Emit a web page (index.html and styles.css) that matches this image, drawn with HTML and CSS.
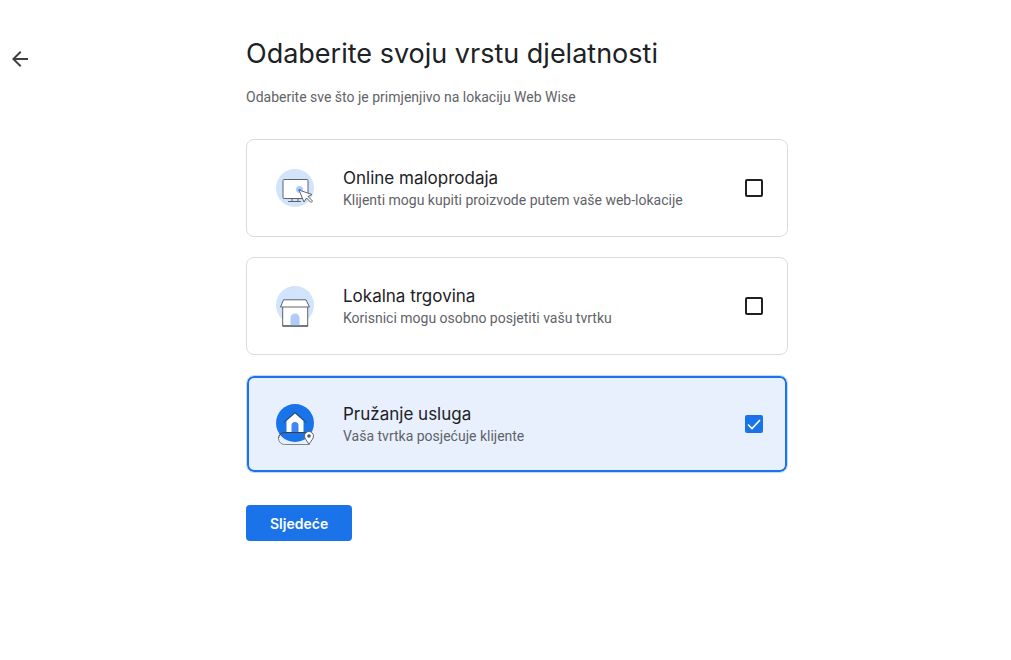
FILE: index.html
```html
<!DOCTYPE html>
<html lang="hr">
<head>
    <meta charset="UTF-8">
    <meta name="viewport" content="width=device-width, initial-scale=1.0">
    <title>Odaberite svoju vrstu djelatnosti</title>
    <link rel="stylesheet" href="styles.css">
</head>
<body>

    <div class="page">
        <a class="back" href="#" aria-label="Natrag">
            <svg width="24" height="24" viewBox="0 0 24 24" fill="#3c4043">
                <path d="M20 11H7.8l5.6-5.6L12 4l-8 8 8 8 1.4-1.4L7.8 13H20z"/>
            </svg>
        </a>

        <main class="content">
            <h1>Odaberite svoju vrstu djelatnosti</h1>
            <p class="subtitle">Odaberite sve što je primjenjivo na lokaciju Web Wise</p>

            <form class="options">
                <label class="card">
                    <svg class="card-icon" viewBox="0 0 48 48" fill="none">
                        <circle cx="24" cy="24" r="19" fill="#d2e3fc"/>
                        <rect x="12" y="15.5" width="25" height="19" rx="1" fill="#fff" stroke="#5f6368"/>
                        <path d="M21 34.5v3h6v-3M17 37.5h13" stroke="#5f6368"/>
                        <circle cx="28.5" cy="25.5" r="3.5" fill="#aecbfa"/>
                        <path d="M28 26l5 12 2.5-4 4.5 4.5 1.5-1.5-4.500-4.500 4-2z" fill="#fff" stroke="#5f6368"/>
                        <circle cx="28.5" cy="26" r="1.2" fill="#4285f4"/>
                    </svg>
                    <span class="card-text">
                        <span class="card-title">Online maloprodaja</span>
                        <span class="card-desc">Klijenti mogu kupiti proizvode putem vaše web-lokacije</span>
                    </span>
                    <input type="checkbox" name="type" value="online">
                </label>

                <label class="card">
                    <svg class="card-icon" viewBox="0 0 48 48" fill="none">
                        <circle cx="24" cy="23" r="19" fill="#d2e3fc"/>
                        <path d="M11.7 25v19h25V25" fill="#fff" stroke="#5f6368"/>
                        <path d="M19.5 44v-8a4.500 4.500 0 0 1 9 0v8z" fill="#aecbfa"/>
                        <path d="M11.500 44h25.500" stroke="#3c4043"/>
                        <path d="M12.5 17.800h22.500l3.500 7.200h-29z" fill="#fff" stroke="#5f6368" stroke-linejoin="round"/>
                    </svg>
                    <span class="card-text">
                        <span class="card-title">Lokalna trgovina</span>
                        <span class="card-desc">Korisnici mogu osobno posjetiti vašu tvrtku</span>
                    </span>
                    <input type="checkbox" name="type" value="local">
                </label>

                <label class="card selected">
                    <svg class="card-icon" viewBox="0 0 48 48" fill="none">
                        <circle cx="24" cy="23" r="19" fill="#1a73e8"/>
                        <path d="M15.500 32.500V21L24 13.500l8.500 7.500v11.500z" fill="#fff"/>
                        <path d="M20.500 32v-6.500a3.500 3.500 0 0 1 7 0V32z" fill="#4285f4"/>
                        <path d="M12.500 22.500L24 12.500l11.500 10" stroke="#3c4043"/>
                        <path d="M35 32.500H13.500a6 6 0 0 0-6 6" stroke="#3c4043"/>
                        <path d="M7.500 38.500a6 6 0 0 0 6 6H38" stroke="#80868b"/>
                        <path d="M38 44.500c-2-4-4.500-5.500-4.500-8.500a4.500 4.500 0 0 1 9 0c0 3-2.500 4.500-4.500 8.500z" fill="#fff" stroke="#5f6368"/>
                        <circle cx="38" cy="36" r="1.8" fill="#3c5a8c"/>
                    </svg>
                    <span class="card-text">
                        <span class="card-title">Pružanje usluga</span>
                        <span class="card-desc">Vaša tvrtka posjećuje klijente</span>
                    </span>
                    <input type="checkbox" name="type" value="service" checked>
                </label>

                <button type="submit" class="btn">Sljedeće</button>
            </form>
        </main>
    </div>

    <script src="script.js"></script>
</body>
</html>
```

FILE: styles.css
```css
* {
    box-sizing: border-box;
}

body {
    margin: 0;
    background: #fff;
    color: #202124;
    font-family: Roboto, "Liberation Sans", sans-serif;
    font-size: 14px;
}

.page {
    display: flex;
    gap: 24px;
    padding: 36px 33px 36px 8px;
}

.back {
    flex: none;
    height: 24px;
    margin-top: 11px;
}

.content {
    flex: 1;
    max-width: 542px;
    margin: 0 auto;
}

h1 {
    margin: 0;
    font-family: Inter, Roboto, sans-serif;
    font-size: 27px;
    font-weight: 400;
    line-height: 36px;
}

.subtitle {
    margin: 15px 0 32px;
    color: #5f6368;
    line-height: 20px;
}

.options {
    display: flex;
    flex-direction: column;
    gap: 20px;
}

.card {
    display: flex;
    align-items: center;
    min-height: 98px;
    padding: 16px 24px;
    border: 1px solid #dadce0;
    border-radius: 8px;
    cursor: pointer;
}

.card.selected {
    background: #e8f0fe;
    border-color: #c6dafc;
    box-shadow: inset 0 0 0 2px #1a73e8;
}

.card-icon {
    flex: none;
    width: 48px;
    height: 48px;
    margin-right: 24px;
}

.card-text {
    display: flex;
    flex: 1;
    flex-direction: column;
}

.card-title {
    font-family: Inter, Roboto, sans-serif;
    font-size: 17px;
    line-height: 24px;
}

.card-desc {
    color: #5f6368;
    line-height: 20px;
}

.card input {
    appearance: none;
    flex: none;
    width: 18px;
    height: 18px;
    margin: 0;
    border: 2px solid #202124;
    border-radius: 2px;
    cursor: pointer;
}

.card input:checked {
    border: none;
    background: #1a73e8 url("data:image/svg+xml,%3Csvg xmlns='http://www.w3.org/2000/svg' viewBox='0 0 18 18'%3E%3Cpath d='M3 9.500l4 4 8-8.500' fill='none' stroke='white' stroke-width='1.600'/%3E%3C/svg%3E") center / 18px no-repeat;
}

.btn {
    align-self: flex-start;
    height: 36px;
    margin-top: 12px;
    padding: 0 24px;
    border: none;
    border-radius: 4px;
    background: #1a73e8;
    color: #fff;
    font-family: Inter, Roboto, sans-serif;
    font-size: 14px;
    font-weight: 600;
    cursor: pointer;
}
```

FILE: script.js
```js
document.querySelectorAll('.card input').forEach(function(input) {
    input.addEventListener('change', function() {
        input.parentElement.classList.toggle('selected', input.checked);
    });
});
```
